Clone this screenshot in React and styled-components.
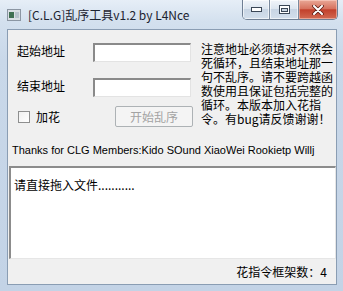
import React from 'react'
import styled, { createGlobalStyle } from 'styled-components'

const GlobalStyle = createGlobalStyle`
  html, body { margin: 0; padding: 0; background: #ffffff; }
  body { font-family: "Noto Sans CJK SC", sans-serif; }
`;

const CJK = `"Noto Sans CJK SC", "Liberation Sans", sans-serif`;

const noteLines = [
  '注意地址必须填对不然会',
  '死循环，且结束地址那一',
  '句不乱序。请不要跨越函',
  '数使用且保证包括完整的',
  '循环。本版本加入花指',
  '令。有bug请反馈谢谢！',
];

function App() {
  return (
    <>
      <GlobalStyle />
      <Window>
        <TitleBar>
          <AppIcon viewBox="0 0 14 12">
            <rect x="0.5" y="0.5" width="13" height="11" fill="#d9dee4" stroke="#8b96a3" />
            <rect x="2" y="3" width="5" height="6" fill="#3f6f52" />
            <rect x="8" y="3" width="4" height="6" fill="#b7c2cc" />
          </AppIcon>
          <Title>[C.L.G]乱序工具v1.2 by L4Nce</Title>
          <Captions>
            <CaptionButton $w={26}>
              <svg width="11" height="5" viewBox="0 0 11 5">
                <rect x="0.5" y="0.5" width="10" height="4" fill="#ffffff" stroke="#3b4756" />
              </svg>
            </CaptionButton>
            <CaptionButton $w={28}>
              <svg width="11" height="9" viewBox="0 0 11 9">
                <rect x="0.5" y="0.5" width="10" height="8" fill="#ffffff" stroke="#3b4756" />
                <rect x="2.5" y="3.5" width="6" height="3" fill="#c9d4e0" stroke="#3b4756" />
              </svg>
            </CaptionButton>
            <CloseButton>
              <svg width="12" height="10" viewBox="0 0 12 10">
                <path d="M2 1 L10 9 M10 1 L2 9" stroke="#5a1f17" strokeWidth="3.6" strokeLinecap="round" />
                <path d="M2 1 L10 9 M10 1 L2 9" stroke="#ffffff" strokeWidth="2" strokeLinecap="round" />
              </svg>
            </CloseButton>
          </Captions>
        </TitleBar>
        <Frame>
          <Client>
            <Top>
              <FormCol>
                <FieldRow $mt={1}>
                  <Label>起始地址</Label>
                  <TextBox />
                </FieldRow>
                <FieldRow $mt={16}>
                  <Label>结束地址</Label>
                  <TextBox />
                </FieldRow>
                <CheckRow>
                  <CheckBox />
                  <CheckLabel>加花</CheckLabel>
                  <Button disabled>开始乱序</Button>
                </CheckRow>
              </FormCol>
              <Note>
                {noteLines.map((l) => (
                  <NoteLine key={l}>{l}</NoteLine>
                ))}
              </Note>
            </Top>
            <Thanks>Thanks for CLG Members:Kido SOund XiaoWei Rookietp Willj</Thanks>
            <DropArea>请直接拖入文件...........</DropArea>
            <Status>花指令框架数：4</Status>
          </Client>
        </Frame>
      </Window>
    </>
  );
}

const Window = styled.div`
  width: 343px;
  height: 291px;
  box-sizing: border-box;
  display: flex;
  flex-direction: column;
  background: linear-gradient(#e6eef7 0px, #d3e0ee 22px, #c9d8e9 60px, #c3d3e6 100%);
  overflow: hidden;
`;

const TitleBar = styled.div`
  height: 29px;
  flex: none;
  display: flex;
  align-items: flex-start;
  padding: 0 5px 0 7px;
`;

const AppIcon = styled.svg`
  width: 14px;
  height: 12px;
  margin-top: 9px;
  flex: none;
`;

const Title = styled.div`
  margin: 7px 0 0 7px;
  font-family: ${CJK};
  font-size: 12px;
  line-height: 16px;
  color: #1c2330;
  white-space: nowrap;
`;

const Captions = styled.div`
  margin-left: auto;
  display: flex;
  height: 20px;
  border: 1px solid #6f7f94;
  border-top: none;
  border-radius: 0 0 5px 5px;
  overflow: hidden;
  box-sizing: border-box;
`;

const CaptionButton = styled.div`
  width: ${(p) => p.$w}px;
  display: flex;
  align-items: center;
  justify-content: center;
  background: linear-gradient(#f1f5fa, #dde6f0 45%, #c8d5e4 50%, #d3dfec 100%);
  border-right: 1px solid #7a8a9e;
  box-shadow: inset 0 0 0 1px rgba(255, 255, 255, 0.6);
`;

const CloseButton = styled.div`
  width: 38px;
  display: flex;
  align-items: center;
  justify-content: center;
  background: linear-gradient(#e9a897, #d7735f 45%, #c2412c 52%, #d26a52 100%);
  box-shadow: inset 0 0 0 1px rgba(255, 220, 210, 0.5);
`;

const Frame = styled.div`
  flex: 1;
  display: flex;
  padding: 0 6px 6px 7px;
`;

const Client = styled.div`
  flex: 1;
  display: flex;
  flex-direction: column;
  background: #f0f0f0;
  border: 1px solid #8a9db3;
  font-family: ${CJK};
  font-size: 12px;
  color: #000;
`;

const Top = styled.div`
  display: flex;
  padding: 12px 0 0 9px;
`;

const FormCol = styled.div`
  width: 184px;
  flex: none;
  display: flex;
  flex-direction: column;
`;

const FieldRow = styled.div`
  display: flex;
  align-items: center;
  height: 19px;
  margin-top: ${(p) => p.$mt}px;
`;

const Label = styled.div`
  width: 76px;
  line-height: 14px;
  margin-top: -3px;
`;

const TextBox = styled.div`
  width: 98px;
  height: 19px;
  box-sizing: border-box;
  background: #fff;
  border: 1px solid #e3e3e3;
  border-top: 2px solid #8a8a8a;
  border-left: 2px solid #8a8a8a;
`;

const CheckRow = styled.div`
  display: flex;
  align-items: center;
  height: 21px;
  margin-top: 9px;
`;

const CheckBox = styled.div`
  width: 12px;
  height: 12px;
  box-sizing: border-box;
  margin-left: 1px;
  border: 1px solid #8e8f8f;
  background: linear-gradient(135deg, #f0f0f0, #ffffff);
`;

const CheckLabel = styled.div`
  margin-left: 6px;
  line-height: 14px;
`;

const Button = styled.button`
  margin-left: auto;
  margin-right: 8px;
  width: 78px;
  height: 21px;
  padding: 0;
  box-sizing: border-box;
  border: 1px solid #adb2b5;
  border-radius: 2px;
  background: #f4f4f4;
  font-family: ${CJK};
  font-size: 12px;
  color: #a3a3a3;
`;

const Note = styled.div`
  display: flex;
  flex-direction: column;
  font-size: 12px;
`;

const NoteLine = styled.div`
  height: 14px;
  line-height: 14px;
  white-space: nowrap;
`;

const Thanks = styled.div`
  margin-top: 17px;
  padding-left: 4px;
  font-family: "Liberation Sans", sans-serif;
  font-size: 11px;
  line-height: 13px;
  white-space: nowrap;
`;

const DropArea = styled.div`
  margin: 9px 0 0 1px;
  height: 93px;
  box-sizing: border-box;
  background: #fff;
  border-top: 2px solid #8c8c8c;
  border-left: 2px solid #8c8c8c;
  border-right: 1px solid #e6e6e6;
  border-bottom: 1px solid #e6e6e6;
  padding: 10px 3px 0;
  line-height: 14px;
`;

const Status = styled.div`
  flex: 1;
  display: flex;
  align-items: center;
  justify-content: flex-end;
  padding-right: 9px;
  line-height: 14px;
`;

export default App
